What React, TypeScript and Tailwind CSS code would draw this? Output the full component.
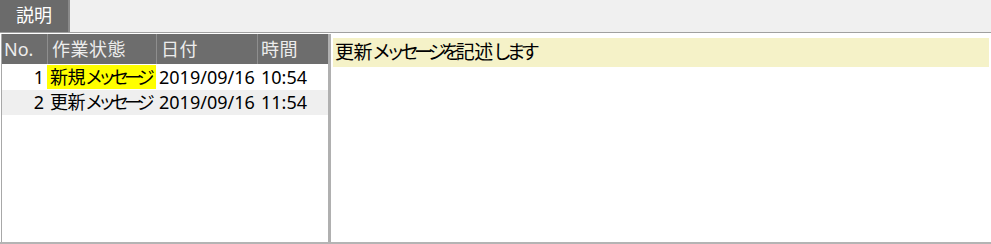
const rows = [
  { no: 1, kanji: "新規", kana: "メッセージ", date: "2019/09/16", time: "10:54", highlight: true },
  { no: 2, kanji: "更新", kana: "メッセージ", date: "2019/09/16", time: "11:54", highlight: false },
];

const font = "font-['Noto_Sans','Noto_Sans_CJK_JP',sans-serif]";

// kanji keep their width, kana are set tighter (the UI font has narrow kana)
const Kana = ({ children }: { children: string }): JSX.Element => (
  <span className="tracking-[-5px]">{children}</span>
);

const App = (): JSX.Element => {
  return (
    <div className={`flex h-[244px] w-[991px] flex-col bg-white text-black ${font}`}>
      {/* tab strip */}
      <div className="flex h-[33px] shrink-0 border-b border-[#a0a0a0] bg-[#f0f0f0]">
        <div className="flex w-[70px] items-center justify-center border-r-2 border-[#8a8a8a] bg-[#6b6b6b] pb-[2px] text-[18px] text-white">
          説明
        </div>
      </div>

      <div className="flex flex-1 border-b-2 border-[#b4b4b4] pt-px">
        {/* list */}
        <div className="ml-px flex w-[330px] flex-col border-l border-r-[3px] border-l-[#a8a8a8] border-r-[#b0b0b0]">
          <div className="flex h-[30px] bg-[#6d6d6d] text-[18px] leading-[30px] text-[#ececec]">
            <div className="w-[45px] pl-[2px]">No.</div>
            <div className="w-[109px] border-l border-[#8e8e8e] pl-[4px] tracking-[0.5px]">作業状態</div>
            <div className="w-[101px] border-l border-[#8e8e8e] pl-[4px] tracking-[0.5px]">日付</div>
            <div className="flex-1 border-l border-[#8e8e8e] pl-[3px] tracking-[0.5px]">時間</div>
          </div>
          {rows.map((row, index) => (
            <div
              key={row.no}
              className={`flex text-[18px] ${index === 0 ? "h-[26px] bg-white leading-[26px]" : "h-[25px] bg-[#efefef] leading-[25px]"}`}
            >
              <div className="w-[45px] pr-[3px] text-right">{row.no}</div>
              <div className={`w-[109px] overflow-hidden whitespace-nowrap pl-[3px] ${row.highlight ? "my-px bg-[#ffff00] leading-[24px]" : ""}`}>
                <span className="tracking-[-0.5px]">{row.kanji}</span>
                <span className="tracking-[-5px]">{row.kana}</span>
              </div>
              <div className="w-[101px] pl-[3px]">{row.date}</div>
              <div className="flex-1 pl-[4px]">{row.time}</div>
            </div>
          ))}
        </div>

        {/* detail */}
        <div className="flex-1 px-[2px] pt-[4px]">
          <div className="h-[29px] whitespace-nowrap bg-[#f5f2c8] pl-[2px] text-[19px] leading-[29px] tracking-[-0.5px]">
            更新<Kana>メッセージを</Kana>記述<Kana>します</Kana>
          </div>
        </div>
      </div>
    </div>
  );
};

export default App;
